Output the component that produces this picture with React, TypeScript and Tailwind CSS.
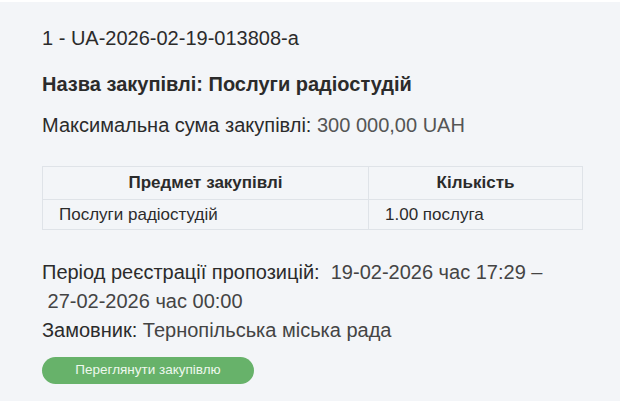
export default function App() {
  return (
    <div className="min-h-screen bg-white font-['Liberation_Sans',Arial,sans-serif]">
      <div className="mr-[3px] mt-[2px] h-[399px] bg-[#f3f5f8] pl-[42px] pr-[37px] pt-[24px] text-[#2b2b2b]">
        <p className="text-[20px] leading-[24px]">1 - UA-2026-02-19-013808-a</p>

        <h2 className="mt-[22px] text-[20px] font-bold leading-[24px]">
          Назва закупівлі: Послуги радіостудій
        </h2>

        <p className="mt-[17px] text-[20px] leading-[24px]">
          Максимальна сума закупівлі:{" "}
          <span className="text-[#555]">300 000,00 UAH</span>
        </p>

        <table className="mt-[29px] w-[541px] border-collapse text-[17px]">
          <thead>
            <tr className="h-[33px]">
              <th className="w-[326px] border border-[#dfe3e8] font-bold">
                Предмет закупівлі
              </th>
              <th className="border border-[#dfe3e8] font-bold">Кількість</th>
            </tr>
          </thead>
          <tbody>
            <tr className="h-[30px]">
              <td className="border border-[#dfe3e8] px-4">
                Послуги радіостудій
              </td>
              <td className="border border-[#dfe3e8] px-4">1.00 послуга</td>
            </tr>
          </tbody>
        </table>

        <div className="mt-[28px] text-[20px] leading-[29px]">
          <p>
            Період реєстрації пропозицій:&nbsp;{" "}
            <span className="text-[#444]">
              19-02-2026 час 17:29 –
              <br />
              &nbsp;27-02-2026 час 00:00
            </span>
          </p>
          <p>
            Замовник:{" "}
            <span className="text-[#444]">Тернопільська міська рада</span>
          </p>
        </div>

        <button className="mt-[12px] h-[27px] w-[212px] rounded-full bg-[#67b26a] text-[13.5px] text-[#eef8ee]">
          Переглянути закупівлю
        </button>
      </div>
    </div>
  );
}
